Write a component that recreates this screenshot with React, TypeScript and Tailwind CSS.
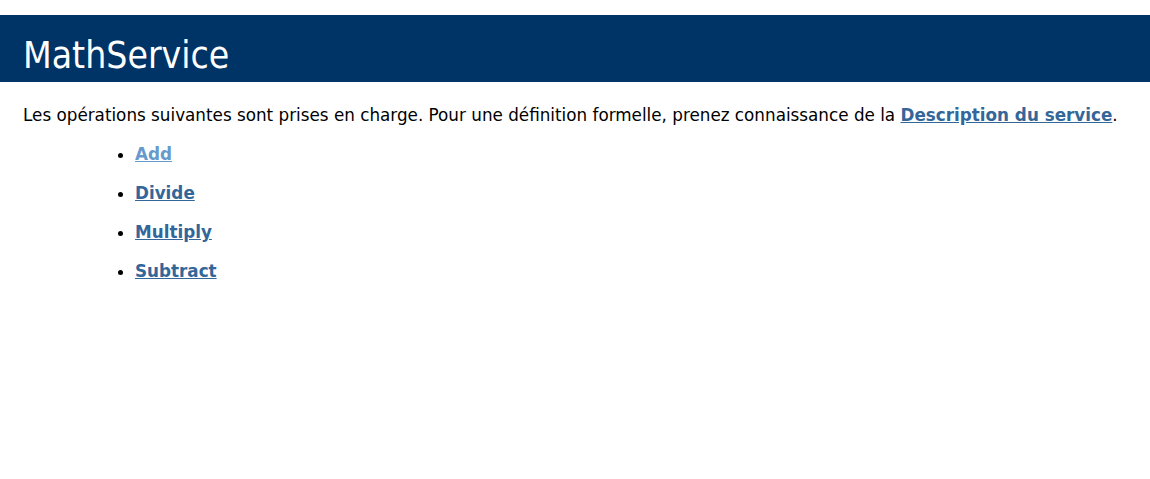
export default function App() {
  return (
    <div className="w-[1150px] h-[479px] bg-white overflow-hidden text-black">
      <div className="pt-[15px]">
        <h1 className="bg-[#003366] text-white pl-[23px] pt-[18px] h-[67px] text-[37px] leading-[46px] font-normal font-['DejaVu_Sans_Condensed','DejaVu_Sans',sans-serif]">
          MathService
        </h1>
      </div>
      <div className="pl-[23px] font-['DejaVu_Sans',sans-serif] text-[16.8px]">
        <p className="mt-[23px] leading-[20px]">
          Les opérations suivantes sont prises en charge. Pour une définition formelle, prenez connaissance de la{" "}
          <a href="#" className="font-bold underline text-[#336699]">Description du service</a>.
        </p>
        <ul className="list-disc ml-[112px] mt-[9px]">
          <li className="mt-[19px] leading-[20px]"><a href="#" className="font-bold underline text-[#6699cc]">Add</a></li>
          <li className="mt-[19px] leading-[20px]"><a href="#" className="font-bold underline text-[#336699]">Divide</a></li>
          <li className="mt-[19px] leading-[20px]"><a href="#" className="font-bold underline text-[#336699]">Multiply</a></li>
          <li className="mt-[19px] leading-[20px]"><a href="#" className="font-bold underline text-[#336699]">Subtract</a></li>
        </ul>
      </div>
    </div>
  );
}
